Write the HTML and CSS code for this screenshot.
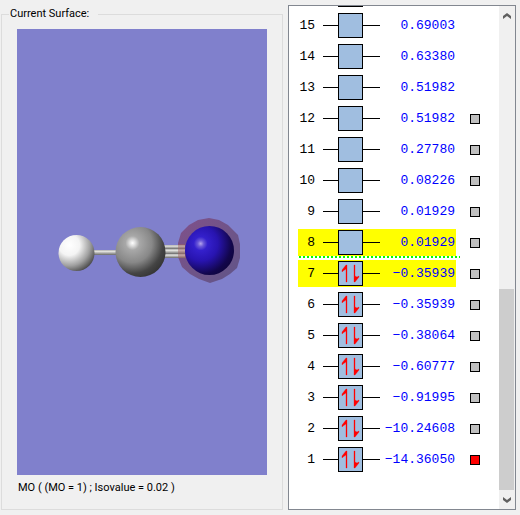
FILE: index.html
```html
<!DOCTYPE html>
<html lang="en">
<head>
<meta charset="utf-8">
<title>Molecular orbitals</title>
<link rel="stylesheet" href="styles.css">
</head>
<body>
<svg class="defs" aria-hidden="true">
  <symbol id="empty" viewBox="0 0 57 25">
    <path d="M0 12.5H57" stroke="#000"/>
    <rect x="15.5" y=".5" width="24" height="24" fill="#a0bee0" stroke="#000"/>
  </symbol>
  <symbol id="pair" viewBox="0 0 57 25">
    <path d="M0 12.5H57" stroke="#000"/>
    <rect x="15.5" y=".5" width="24" height="24" fill="#a0bee0" stroke="#000"/>
    <path d="M23 4h1v17h-1V8l-3 2-1 1V9zM31 4h1v11l2 1 2-1v1l-4 5h-1z" fill="#f00" stroke="#f00" stroke-width=".3"/>
  </symbol>
</svg>
<main class="window">
  <fieldset class="surface">
    <legend>Current Surface:</legend>
    <div class="view">
      <svg class="molecule" viewBox="0 0 250 446">
        <defs>
          <radialGradient id="h" cx=".3" cy=".28" r=".82"><stop offset="0" stop-color="#fff"/><stop offset=".35" stop-color="#f4f4f4"/><stop offset=".7" stop-color="#a0a0a0"/><stop offset="1" stop-color="#404040"/></radialGradient>
          <radialGradient id="c" cx=".34" cy=".32" r=".78"><stop offset="0" stop-color="#fff"/><stop offset=".07" stop-color="#e0e0e0"/><stop offset=".18" stop-color="#a8a8a8"/><stop offset=".5" stop-color="#888"/><stop offset=".78" stop-color="#444"/><stop offset="1" stop-color="#303030"/></radialGradient>
          <radialGradient id="n" cx=".32" cy=".36" r=".78"><stop offset="0" stop-color="#b4a4ec"/><stop offset=".08" stop-color="#6a58d8"/><stop offset=".18" stop-color="#3420cc"/><stop offset=".45" stop-color="#2814b0"/><stop offset=".8" stop-color="#12064c"/><stop offset="1" stop-color="#0e0438"/></radialGradient>
          <linearGradient id="iso" x2="1" y2="1"><stop offset="0" stop-color="#80508a"/><stop offset=".5" stop-color="#705488"/><stop offset="1" stop-color="#605488"/></linearGradient>
          <linearGradient id="bond" x2="0" y2="1"><stop offset="0" stop-color="#b0b0b0"/><stop offset=".3" stop-color="#e0e0dc"/><stop offset="1" stop-color="#686868"/></linearGradient>
        </defs>
        <rect x="76" y="221" width="25" height="5" fill="url(#bond)"/>
        <path d="M192 189l10 2 9 5 6 6 4 4 2 9v14l-3 10-7 6-8 5-12 4-11-4-9-5-8-7-4-10v-14l3-10 8-8 9-5z" fill="url(#iso)"/>
        <g fill="url(#bond)"><rect x="146" y="216" width="22" height="4"/><rect x="146" y="220" width="22" height="5"/><rect x="146" y="225" width="22" height="4"/></g>
        <path d="M161 215h8v14h-8z" fill="#a06060" opacity=".45"/>
        <circle cx="59.5" cy="224" r="18" fill="url(#h)"/>
        <circle cx="123.5" cy="223" r="25" fill="url(#c)"/>
        <circle cx="192.5" cy="221.5" r="24.5" fill="url(#n)"/>
      </svg>
    </div>
    <p class="caption">MO ( (MO = 1) ; Isovalue = 0.02 )</p>
  </fieldset>

  <section class="orbitals">
    <div class="list">
      <div class="row"><span class="level"><span class="index"></span><svg class="diagram"><use href="#empty"/></svg></span></div>
      <div class="row"><span class="level"><span class="index">15</span><svg class="diagram"><use href="#empty"/></svg><span class="energy">0.69003</span></span></div>
      <div class="row"><span class="level"><span class="index">14</span><svg class="diagram"><use href="#empty"/></svg><span class="energy">0.63380</span></span></div>
      <div class="row"><span class="level"><span class="index">13</span><svg class="diagram"><use href="#empty"/></svg><span class="energy">0.51982</span></span></div>
      <label class="row"><span class="level"><span class="index">12</span><svg class="diagram"><use href="#empty"/></svg><span class="energy">0.51982</span></span><input type="checkbox"></label>
      <label class="row"><span class="level"><span class="index">11</span><svg class="diagram"><use href="#empty"/></svg><span class="energy">0.27780</span></span><input type="checkbox"></label>
      <label class="row"><span class="level"><span class="index">10</span><svg class="diagram"><use href="#empty"/></svg><span class="energy">0.08226</span></span><input type="checkbox"></label>
      <label class="row"><span class="level"><span class="index">9</span><svg class="diagram"><use href="#empty"/></svg><span class="energy">0.01929</span></span><input type="checkbox"></label>
      <label class="row selected"><span class="level"><span class="index">8</span><svg class="diagram"><use href="#empty"/></svg><span class="energy">0.01929</span></span><input type="checkbox"></label>
      <hr class="fermi">
      <label class="row selected"><span class="level"><span class="index">7</span><svg class="diagram"><use href="#pair"/></svg><span class="energy">−0.35939</span></span><input type="checkbox"></label>
      <label class="row"><span class="level"><span class="index">6</span><svg class="diagram"><use href="#pair"/></svg><span class="energy">−0.35939</span></span><input type="checkbox"></label>
      <label class="row"><span class="level"><span class="index">5</span><svg class="diagram"><use href="#pair"/></svg><span class="energy">−0.38064</span></span><input type="checkbox"></label>
      <label class="row"><span class="level"><span class="index">4</span><svg class="diagram"><use href="#pair"/></svg><span class="energy">−0.60777</span></span><input type="checkbox"></label>
      <label class="row"><span class="level"><span class="index">3</span><svg class="diagram"><use href="#pair"/></svg><span class="energy">−0.91995</span></span><input type="checkbox"></label>
      <label class="row"><span class="level"><span class="index">2</span><svg class="diagram"><use href="#pair"/></svg><span class="energy">−10.24608</span></span><input type="checkbox"></label>
      <label class="row"><span class="level"><span class="index">1</span><svg class="diagram"><use href="#pair"/></svg><span class="energy">−14.36050</span></span><input type="checkbox" checked></label>
    </div>
    <div class="scrollbar">
      <button type="button" aria-label="Scroll up"><svg viewBox="0 0 8 6"><path d="M0 3l4-3 4 3v3L4 3 0 6z"/></svg></button>
      <div class="thumb"></div>
      <button type="button" aria-label="Scroll down"><svg viewBox="0 0 8 6"><path d="M0 0l4 3 4-3v3L4 6 0 3z"/></svg></button>
    </div>
  </section>
</main>
</body>
</html>
```
FILE: styles.css
```css
* { box-sizing: border-box; }

body {
  margin: 0;
  background: #f0f0f0;
  color: #000;
  font: 11px/14px Roboto, "Liberation Sans", sans-serif;
}

.defs { display: none; }

.window {
  display: flex;
  gap: 5px;
  height: 100vh;
  padding: 5px 4px 5px 1px;
}

.surface {
  display: flex;
  flex: 1;
  flex-direction: column;
  min-width: 0;
  margin: 2px 0 0;
  padding: 8px 15px 14px;
  border: 1px solid #dcdcdc;
}

.surface legend {
  margin-left: -8px;
  padding: 0 9px 0 1px;
}

.view {
  flex: 1;
  min-height: 0;
  background: #8080cc;
}

.molecule {
  display: block;
  width: 100%;
  height: 100%;
}

.caption { margin: 6px 0 0 1px; }

.orbitals {
  display: flex;
  flex: none;
  border: 1px solid #828790;
  background: #fff;
  overflow: hidden;
}

.list {
  display: flex;
  flex-direction: column;
  justify-content: flex-end;
  gap: 4px;
  width: 210px;
  padding: 0 0 36px 9px;
  font: 13px/16px "Liberation Mono", monospace;
}

.row {
  display: flex;
  flex: none;
  align-items: center;
  gap: 14px;
  height: 27px;
}

.level {
  display: flex;
  align-items: center;
  width: 158px;
  height: 27px;
  padding-right: 1px;
}

.selected .level { background: #ff0; }

.index {
  width: 17px;
  margin-right: 8px;
  text-align: right;
}

.diagram {
  flex: none;
  width: 57px;
  height: 25px;
}

.energy {
  flex: 1;
  color: #00f;
  text-align: right;
  white-space: nowrap;
}

.row input {
  appearance: none;
  width: 10px;
  height: 10px;
  margin: 0;
  border: 1px solid #000;
  background: #c0c0c0;
}

.row input:checked { background: #f00; }

.fermi {
  flex: none;
  width: 162px;
  height: 2px;
  margin: -4px 0 -2px;
  border: 0;
  background: repeating-linear-gradient(90deg, #fff 0 1px, #0f0 1px 3px, #fff 3px 4px);
}

.scrollbar {
  display: flex;
  flex-direction: column;
  justify-content: flex-end;
  width: 16px;
  padding-right: 1px;
  background: #f0f0f0;
}

.scrollbar button {
  display: grid;
  place-items: center;
  height: 19px;
  padding: 0;
  border: 0;
  background: none;
}

.scrollbar button:first-child { margin-bottom: auto; }

.scrollbar svg {
  width: 8px;
  height: 6px;
  fill: #606060;
}

.thumb {
  height: 40%;
  background: #cdcdcd;
}
```
